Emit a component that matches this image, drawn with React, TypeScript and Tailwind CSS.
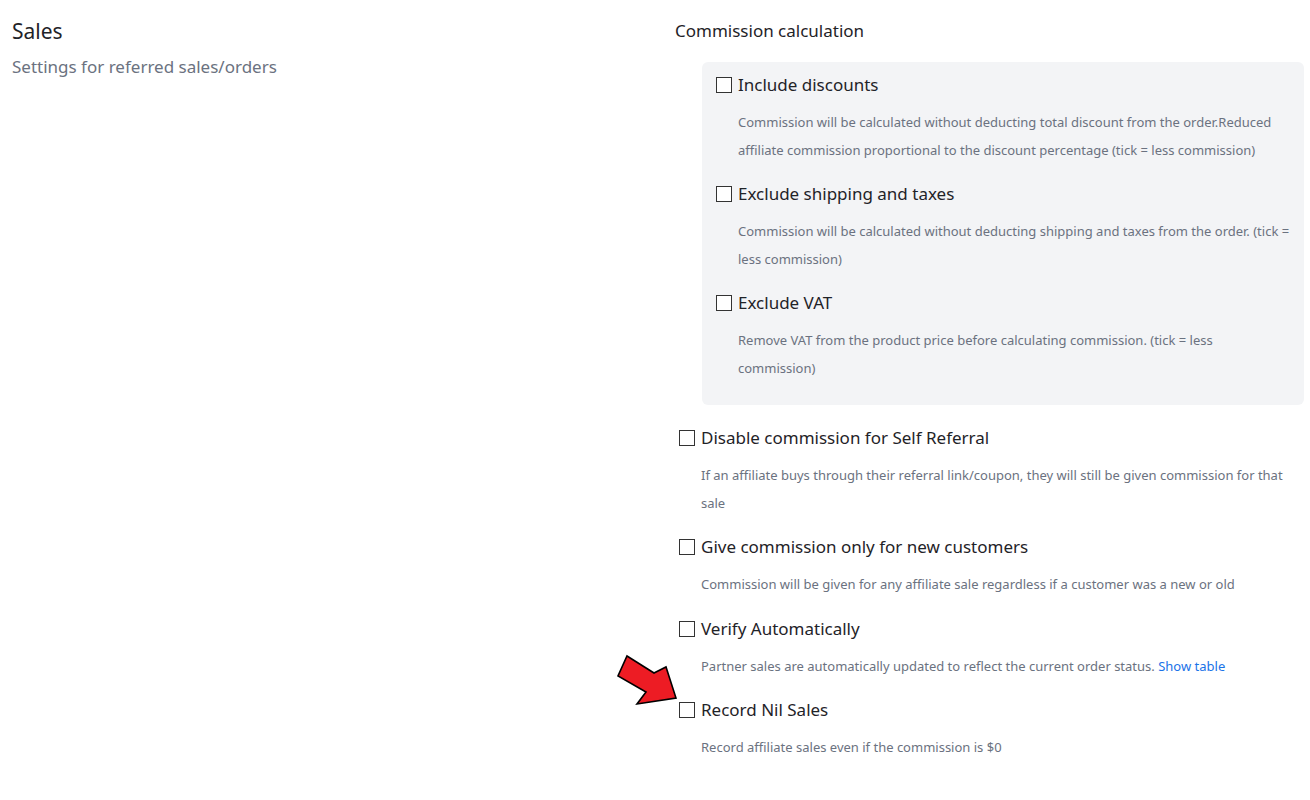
const font = { fontFamily: '"Noto Sans", "Open Sans", sans-serif' };

type OptionProps = {
  label: string;
  children: React.ReactNode;
};

const Option = ({ label, children }: OptionProps) => (
  <div>
    <label className="flex items-center h-6 gap-[6px]">
      <span className="w-[16px] h-[16px] border-[1.5px] border-[#333] bg-white shrink-0" />
      <span className="text-[17px] text-[#1f2328] leading-6">{label}</span>
    </label>
    <p className="mt-3 pl-[22px] text-[13px] leading-[27.5px] text-[#6b7280]">
      {children}
    </p>
  </div>
);

const RedArrow = () => (
  <svg className="absolute -left-[67px] -top-[48px]" width="70" height="60" viewBox="612 650 70 60">
    <polygon
      points="627,656 654,673 666,667 676,698 637,704 646,692 618,676"
      fill="#ed1c24"
      stroke="#000"
      strokeWidth="1.6"
      strokeLinejoin="miter"
    />
  </svg>
);

export default function App() {
  return (
    <div className="min-h-screen bg-white flex" style={font}>
      <div className="w-[675px] shrink-0 pl-3 pt-[16px]">
        <h1 className="text-[21px] leading-[30px] text-[#1f2328]">Sales</h1>
        <p className="mt-[9px] text-[17px] leading-[24px] text-[#6b7280]">
          Settings for referred sales/orders
        </p>
      </div>

      <div className="flex-1 pr-[6px] pt-[19px]">
        <h2 className="text-[17px] leading-6 text-[#1f2328]">Commission calculation</h2>

        <div className="mt-[19px] ml-[27px] bg-[#f3f4f6] rounded-md pt-[11px] pb-[23px] pl-[14px] pr-3 flex flex-col gap-[18px]">
          <Option label="Include discounts">
            Commission will be calculated without deducting total discount from the order.Reduced affiliate
            commission proportional to the discount percentage (tick = less commission)
          </Option>
          <Option label="Exclude shipping and taxes">
            Commission will be calculated without deducting shipping and taxes from the order. (tick = less
            commission)
          </Option>
          <Option label="Exclude VAT">
            Remove VAT from the product price before calculating commission. (tick = less commission)
          </Option>
        </div>

        <div className="mt-[21px] pl-1 flex flex-col gap-[18px]">
          <Option label="Disable commission for Self Referral">
            If an affiliate buys through their referral link/coupon, they will still be given commission for that
            sale
          </Option>
          <Option label="Give commission only for new customers">
            Commission will be given for any affiliate sale regardless if a customer was a new or old
          </Option>
          <Option label="Verify Automatically">
            Partner sales are automatically updated to reflect the current order status.{" "}
            <a className="text-[#1a73e8]">Show table</a>
          </Option>
          <div className="relative">
            <RedArrow />
            <Option label="Record Nil Sales">Record affiliate sales even if the commission is $0</Option>
          </div>
        </div>
      </div>
    </div>
  );
}
